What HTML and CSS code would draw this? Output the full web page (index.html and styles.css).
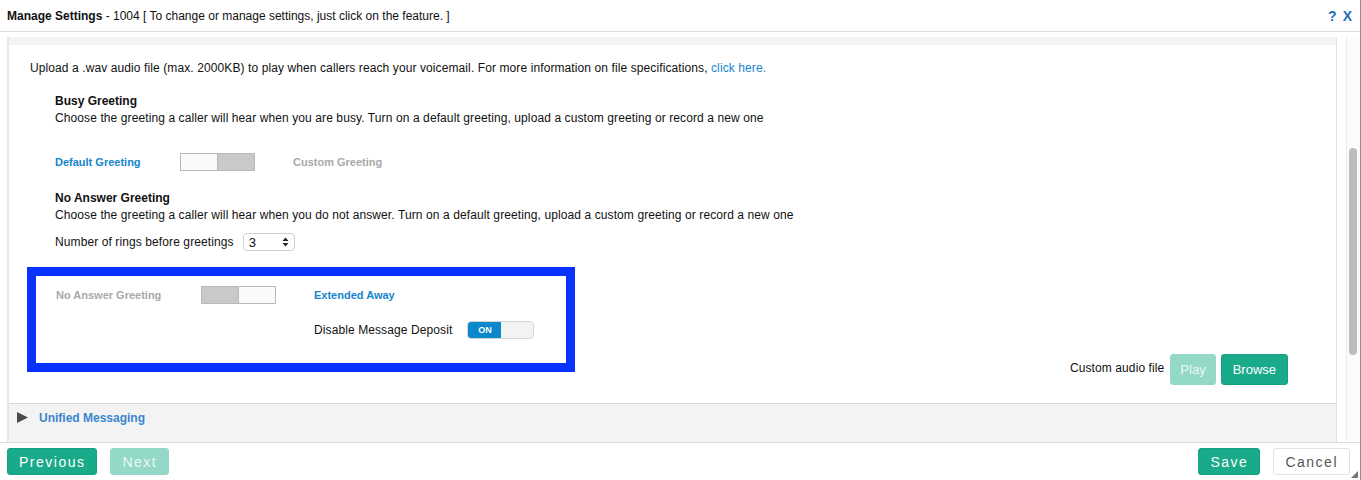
FILE: index.html
```html
<!DOCTYPE html>
<html lang="en">
<head>
    <meta charset="UTF-8">
    <title>Manage Settings - 1004</title>
    <link rel="stylesheet" href="styles.css">
</head>
<body>

    <div class="dialog">
        <div class="titleBar">
            <div class="title"><b>Manage Settings</b> - 1004 [ To change or manage settings, just click on the feature. ]</div>
            <div class="titleIcons"><span>?</span><span>X</span></div>
        </div>

        <div class="dialogBody">
            <div class="panel">
                <div class="panelStrip"></div>

                <div class="panelContent">
                    <p class="intro">Upload a .wav audio file (max. 2000KB) to play when callers reach your voicemail. For more information on file specifications, <a href="#">click here.</a></p>

                    <div class="section">
                        <h4>Busy Greeting</h4>
                        <p>Choose the greeting a caller will hear when you are busy. Turn on a default greeting, upload a custom greeting or record a new one</p>

                        <div class="greetingRow">
                            <span class="optLabel active">Default Greeting</span>
                            <span class="switch right"><i></i><i></i></span>
                            <span class="optLabel muted">Custom Greeting</span>
                        </div>

                        <h4>No Answer Greeting</h4>
                        <p>Choose the greeting a caller will hear when you do not answer. Turn on a default greeting, upload a custom greeting or record a new one</p>

                        <div class="ringsRow">
                            <span>Number of rings before greetings</span>
                            <span class="selectBox">3 <svg width="7" height="10" viewBox="0 0 7 10"><path d="M3.5 0.5 L6.5 4 H0.5 Z M3.5 9.5 L6.5 6 H0.5 Z" fill="#222"/></svg></span>
                        </div>
                    </div>

                    <div class="lowerRow">
                        <div class="highlightBox">
                            <span class="optLabel muted">No Answer Greeting</span>
                            <span class="switch left"><i></i><i></i></span>
                            <span class="optLabel active">Extended Away</span>

                            <span></span>
                            <span></span>
                            <div class="depositRow">
                                <span>Disable Message Deposit</span>
                                <span class="onSwitch"><b>ON</b><i></i></span>
                            </div>
                        </div>

                        <div class="audioGroup">
                            <span>Custom audio file</span>
                            <button class="btn btnLight">Play</button>
                            <button class="btn">Browse</button>
                        </div>
                    </div>
                </div>

                <div class="accordionRow">
                    <svg width="11" height="11" viewBox="0 0 11 11"><path d="M0 0 L11 5.5 L0 11 Z" fill="#4a4a4a"/></svg>
                    <span>Unified Messaging</span>
                </div>
            </div>

            <div class="scrollTrack">
                <div class="scrollThumb"></div>
            </div>
        </div>

        <div class="footer">
            <div class="footerGroup">
                <button class="btn wide">Previous</button>
                <button class="btn wide btnLight">Next</button>
            </div>
            <div class="footerGroup">
                <button class="btn wide">Save</button>
                <button class="btn wide btnCancel">Cancel</button>
            </div>
            <div class="grip"></div>
        </div>
    </div>

</body>
</html>
```

FILE: styles.css
```css
body {
    margin: 0;
    font-family: "Liberation Sans", Arial, sans-serif;
    font-size: 12px;
    color: #111;
    background-color: #fff;
}

.dialog {
    width: 1360px;
    height: 480px;
    border-right: 1px solid #8c8c8c;
    display: flex;
    flex-direction: column;
    position: relative;
}

/* Barra de titulo */
.titleBar {
    height: 31px;
    border-bottom: 1px solid #dcdcdc;
    padding: 0 8px 0 7px;
    display: flex;
    align-items: center;
    justify-content: space-between;
}

.title b {
    font-weight: bold;
}

.titleIcons {
    color: #1f6fb8;
    font-weight: bold;
    font-size: 14px;
    display: flex;
    gap: 6px;
}

/* Corpo com painel e barra de rolagem */
.dialogBody {
    flex: 1;
    display: flex;
    padding-top: 5px;
    min-height: 0;
}

.panel {
    width: 1328px;
    margin-left: 7px;
    border-left: 2px solid #e6e6e6;
    border-right: 1px solid #e2e2e2;
    display: flex;
    flex-direction: column;
}

.panelStrip {
    height: 8px;
    background-color: #f3f3f3;
}

.panelContent {
    flex: 1;
    padding: 15px 48px 0 21px;
    border-bottom: 1px solid #d6d6d6;
}

.panelContent p {
    margin: 0;
    line-height: 17px;
    letter-spacing: 0.1px;
}

.intro a {
    color: #1a86d0;
    text-decoration: none;
}

.section {
    padding: 16px 0 0 25px;
}

.section h4 {
    margin: 0;
    font-size: 12px;
    line-height: 17px;
}

.greetingRow {
    display: flex;
    align-items: center;
    height: 18px;
    margin: 26px 0 19px;
}

.optLabel {
    font-size: 11px;
    font-weight: bold;
    width: 125px;
}

.optLabel.active {
    color: #1584cd;
}

.optLabel.muted {
    color: #a9a9a9;
}

.greetingRow .switch {
    margin-right: 38px;
}

.switch {
    width: 73px;
    height: 16px;
    border: 1px solid #b9b9b9;
    display: flex;
}

.switch i {
    flex: 1;
    background-color: #fafafa;
}

.switch.right i:last-child,
.switch.left i:first-child {
    background-color: #c9c9c9;
    border-left: 1px solid #b9b9b9;
}

.switch.left i:first-child {
    border-left: none;
    border-right: 1px solid #b9b9b9;
}

.ringsRow {
    display: flex;
    align-items: center;
    gap: 9px;
    margin-top: 9px;
    letter-spacing: 0.1px;
}

.selectBox {
    width: 40px;
    height: 16px;
    border: 1px solid #d0d0d0;
    border-radius: 4px;
    padding: 0 5px;
    display: flex;
    align-items: center;
    justify-content: space-between;
    font-size: 13px;
}

/* Caixa destacada */
.lowerRow {
    display: flex;
    justify-content: space-between;
    align-items: flex-start;
    margin: 16px 0 0 -3px;
}

.highlightBox {
    width: 510px;
    border: 9px solid #0a32fd;
    padding: 10px 0 24px 20px;
    display: grid;
    grid-template-columns: 145px 113px auto;
    grid-auto-rows: 18px;
    align-items: center;
    row-gap: 17px;
}

.highlightBox .optLabel {
    width: auto;
}

.depositRow {
    display: flex;
    align-items: center;
    gap: 15px;
    letter-spacing: 0.1px;
}

.onSwitch {
    width: 65px;
    height: 16px;
    border: 1px solid #d4d4d4;
    border-radius: 4px;
    overflow: hidden;
    display: flex;
    letter-spacing: 0;
}

.onSwitch b {
    width: 33px;
    background-color: #0b87cb;
    color: white;
    font-size: 9px;
    line-height: 16px;
    text-align: center;
}

.onSwitch i {
    flex: 1;
    background-color: #f3f3f3;
}

.audioGroup {
    display: flex;
    align-items: center;
    gap: 5px;
    margin-top: 87px;
}

.audioGroup span {
    margin-right: 1px;
    margin-top: -4px;
    letter-spacing: 0.1px;
}

/* Botoes */
.btn {
    font-family: "Liberation Sans", Arial, sans-serif;
    font-size: 13px;
    color: white;
    background-color: #19aa8a;
    border: 1px solid #17a083;
    border-radius: 3px;
    height: 31px;
    padding: 0 11px;
}

.audioGroup .btnLight {
    padding: 0 9px;
}

.btnLight {
    background-color: #94d9c8;
    border-color: #94d9c8;
    color: #e9f8f4;
}

.btn.wide {
    height: 27px;
    font-size: 14px;
    letter-spacing: 1.5px;
    padding: 0 11px;
}

.btnCancel {
    background-color: white;
    color: #555;
    border-color: #e2e2e2;
}

/* Acordeao */
.accordionRow {
    height: 38px;
    box-sizing: border-box;
    background-color: #f3f3f3;
    display: flex;
    align-items: flex-start;
    gap: 11px;
    padding: 7px 0 0 8px;
    color: #3a86cf;
    font-weight: bold;
}

.accordionRow svg {
    margin-top: 1px;
}

.scrollTrack {
    margin-left: 9px;
    width: 13px;
    border-left: 1px solid #ececec;
    background-color: #fbfbfb;
    padding-top: 111px;
}

.scrollThumb {
    width: 8px;
    height: 207px;
    margin-left: 2px;
    border-radius: 4px;
    background-color: #bdbdbd;
}

/* Rodape */
.footer {
    height: 37px;
    border-top: 1px solid #dcdcdc;
    display: flex;
    justify-content: space-between;
    align-items: center;
    padding: 0 10px 0 7px;
}

.footerGroup {
    display: flex;
    gap: 13px;
}

.grip {
    position: absolute;
    right: 2px;
    bottom: 2px;
    width: 0;
    height: 0;
    border-left: 7px solid transparent;
    border-bottom: 7px solid #777;
}
```
